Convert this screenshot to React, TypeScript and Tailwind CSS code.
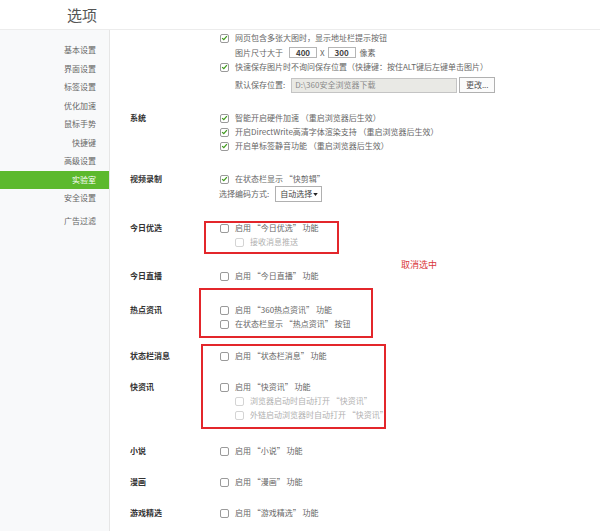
import React from "react";

const font = { fontFamily: '"Noto Sans CJK SC", "Noto Sans", sans-serif' };

const menu = ["基本设置", "界面设置", "标签设置", "优化加速", "鼠标手势", "快捷键", "高级设置", "实验室", "安全设置"];

const Checkbox: React.FC<{ checked?: boolean; disabled?: boolean }> = ({ checked, disabled }) => (
  <span
    className={`flex h-[9px] w-[9px] shrink-0 items-center justify-center rounded-[2px] border bg-white ${
      disabled ? "border-[#d4d4d4]" : "border-[#9a9a9a]"
    }`}
  >
    {checked && (
      <svg viewBox="0 0 10 10" className="h-[8px] w-[8px]">
        <path d="M1.6 5.2 L4 7.4 L8.4 2.4" fill="none" stroke="#3f9a1c" strokeWidth="1.8" />
      </svg>
    )}
  </span>
);

const Check: React.FC<{ checked?: boolean; disabled?: boolean; sub?: boolean; children: React.ReactNode }> = ({
  checked,
  disabled,
  sub,
  children,
}) => (
  <div className={`flex h-[14px] items-center gap-[6px] ${sub ? "pl-[15px]" : ""}`}>
    <Checkbox checked={checked} disabled={disabled} />
    <span className={`whitespace-nowrap ${disabled ? "text-[#b0b0b0]" : "text-[#666]"}`}>{children}</span>
  </div>
);

const Section: React.FC<{ label?: string; className?: string; children: React.ReactNode }> = ({
  label,
  className,
  children,
}) => (
  <div className={`flex ${className ?? ""}`}>
    <div className="flex h-[14px] w-[90px] shrink-0 items-center font-bold text-[#333]">{label}</div>
    <div className="flex flex-col">{children}</div>
  </div>
);

export default function App() {
  return (
    <div className="relative h-[531px] w-[600px] overflow-hidden bg-white text-[8px] leading-none" style={font}>
      {/* Header */}
      <div className="flex h-[30px] border-b border-[#ececec]">
        <div className="flex w-[110px] items-center justify-end pr-[13px] text-[15px] text-[#555]">选项</div>
      </div>

      <div className="flex h-[501px]">
        {/* Sidebar */}
        <div className="w-[110px] shrink-0 border-r border-[#e6e6e6] bg-[#f8f9fa] pt-[11px]">
          {menu.map((m) => (
            <div
              key={m}
              className={`flex h-[18.5px] items-center justify-end pr-[13px] ${
                m === "实验室" ? "bg-[#5cb92d] text-white" : "text-[#666]"
              }`}
            >
              {m}
            </div>
          ))}
          <div className="mt-[4px] flex h-[18.5px] items-center justify-end pr-[13px] text-[#666]">广告过滤</div>
        </div>

        {/* Content */}
        <div className="flex-1 pl-[20px] pt-[1px]">
          <Section>
            <Check checked>网页包含多张大图时，显示地址栏提示按钮</Check>
            <div className="flex h-[15px] items-center pl-[15px] text-[#666]">
              <span>图片尺寸大于</span>
              <span className="ml-[6px] flex h-[11px] w-[28px] items-center justify-center border border-[#b5b5b5] font-bold text-[#444]">
                400
              </span>
              <span className="mx-[3px]">X</span>
              <span className="flex h-[11px] w-[28px] items-center justify-center border border-[#b5b5b5] font-bold text-[#444]">
                300
              </span>
              <span className="ml-[4px]">像素</span>
            </div>
            <Check checked>快速保存图片时不询问保存位置（快捷键：按住ALT键后左键单击图片）</Check>
            <div className="mt-[3px] flex h-[16px] items-center pl-[15px] text-[#666]">
              <span>默认保存位置:</span>
              <span className="ml-[6px] flex h-[15px] w-[166px] items-center border border-[#c4c4c4] bg-[#e9e9e5] pl-[3px] text-[#8a8a8a]">
                D:\360安全浏览器下载
              </span>
              <span className="ml-[2px] flex h-[16px] w-[36px] items-center justify-center border border-[#b0b0b0] bg-[#fbfbfb] text-[#555]">
                更改...
              </span>
            </div>
          </Section>

          <Section label="系统" className="mt-[18px]">
            <Check checked>智能开启硬件加速 （重启浏览器后生效）</Check>
            <Check checked>开启DirectWrite高清字体渲染支持 （重启浏览器后生效）</Check>
            <Check checked>开启单标签静音功能 （重启浏览器后生效）</Check>
          </Section>

          <Section label="视频录制" className="mt-[19px]">
            <Check checked>在状态栏显示 “快剪辑”</Check>
            <div className="-ml-[1px] flex h-[16px] items-center text-[#666]">
              <span>选择编码方式:</span>
              <span className="ml-[6px] flex h-[16px] w-[47px] items-center justify-between border border-[#b0b0b0] bg-white pl-[4px] pr-[3px] text-[#444]">
                自动选择
                <svg viewBox="0 0 6 4" className="h-[3px] w-[5px]">
                  <path d="M0 0 H6 L3 4 Z" fill="#222" />
                </svg>
              </span>
            </div>
          </Section>

          <Section label="今日优选" className="mt-[19px]">
            <Check>启用 “今日优选” 功能</Check>
            <Check sub disabled>
              接收消息推送
            </Check>
          </Section>

          <Section label="今日直播" className="mt-[20px]">
            <Check>启用 “今日直播” 功能</Check>
          </Section>

          <Section label="热点资讯" className="mt-[20px]">
            <Check>启用 “360热点资讯” 功能</Check>
            <Check>在状态栏显示 “热点资讯” 按钮</Check>
          </Section>

          <Section label="状态栏消息" className="mt-[18px]">
            <Check>启用 “状态栏消息” 功能</Check>
          </Section>

          <Section label="快资讯" className="mt-[17px]">
            <Check>启用 “快资讯” 功能</Check>
            <Check sub disabled>
              浏览器启动时自动打开 “快资讯”
            </Check>
            <Check sub disabled>
              外链启动浏览器时自动打开 “快资讯”
            </Check>
          </Section>

          <Section label="小说" className="mt-[22px]">
            <Check>启用 “小说” 功能</Check>
          </Section>

          <Section label="漫画" className="mt-[17px]">
            <Check>启用 “漫画” 功能</Check>
          </Section>

          <Section label="游戏精选" className="mt-[17px]">
            <Check>启用 “游戏精选” 功能</Check>
          </Section>
        </div>
      </div>

      {/* Annotations */}
      <div className="absolute left-[204px] top-[221px] h-[33px] w-[135px] border-2 border-[#e3262b]" />
      <div className="absolute left-[199px] top-[288px] h-[50px] w-[174px] border-2 border-[#e3262b]" />
      <div className="absolute left-[201px] top-[344px] h-[85px] w-[185px] border-2 border-[#e3262b]" />
      <div className="absolute left-[401px] top-[260px] text-[9px] text-[#d9373b]">取消选中</div>
    </div>
  );
}
